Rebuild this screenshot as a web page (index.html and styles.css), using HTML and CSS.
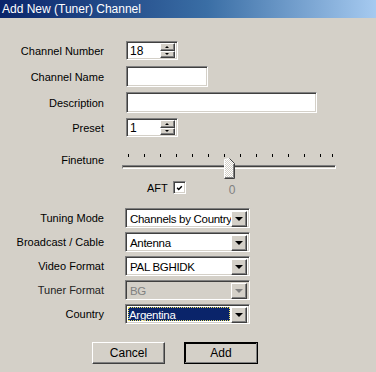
FILE: index.html
```html
<!DOCTYPE html>
<html lang="en">
<head>
    <meta charset="utf-8">
    <link rel="stylesheet" href="styles.css">
</head>
<body>
	<div class="titlebar">Add New (Tuner) Channel</div>
	<div class="dialog">
		<div class="row first">
			<span class="lbl">Channel Number</span>
			<div class="field spin"><span class="val">18</span>
				<div class="spinbtns"><span class="sb up"></span><span class="sb down"></span></div>
			</div>
		</div>
		<div class="row gap6">
			<span class="lbl">Channel Name</span>
			<div class="field name"></div>
		</div>
		<div class="row gap5">
			<span class="lbl">Description</span>
			<div class="field desc"></div>
		</div>
		<div class="row gap5">
			<span class="lbl">Preset</span>
			<div class="field spin"><span class="val">1</span>
				<div class="spinbtns"><span class="sb up"></span><span class="sb down"></span></div>
			</div>
		</div>

		<div class="row finetune">
			<span class="lbl ft">Finetune</span>
			<div class="slider">
				<div class="ticks"></div>
				<div class="track"></div>
				<svg class="thumb" width="11" height="21" viewBox="0 0 11 21">
					<defs>
						<pattern id="dots" width="2" height="2" patternUnits="userSpaceOnUse">
							<rect width="2" height="2" fill="#d4d0c8"/>
							<rect width="1" height="1" fill="#fff"/>
							<rect x="1" y="1" width="1" height="1" fill="#fff"/>
						</pattern>
					</defs>
					<polygon points="0.5,1.5 5.5,0.5 10.5,5.5 10.5,20.5 0.5,20.5" fill="url(#dots)" stroke="none"/>
					<polyline points="0.5,20 0.5,1.5 5.5,0.5" fill="none" stroke="#fff"/>
					<polyline points="5.5,0.5 10.5,5.5 10.5,20.5 0.5,20.5" fill="none" stroke="#404040"/>
					<polyline points="9.5,6 9.5,19.5 1,19.5" fill="none" stroke="#808080"/>
				</svg>
			</div>
		</div>
		<div class="aft">
			<span>AFT</span>
			<span class="check">
				<svg width="9" height="9" viewBox="0 0 9 9"><polyline points="1.5,3.5 3.5,5.8 7.5,1.5" fill="none" stroke="#000" stroke-width="1.8"/></svg>
			</span>
			<span class="zero">0</span>
		</div>

		<div class="row sel-first">
			<span class="lbl">Tuning Mode</span>
			<div class="combo"><span class="ctext">Channels by Country</span><span class="cbtn"></span></div>
		</div>
		<div class="row gap4">
			<span class="lbl">Broadcast / Cable</span>
			<div class="combo"><span class="ctext">Antenna</span><span class="cbtn"></span></div>
		</div>
		<div class="row gap4">
			<span class="lbl">Video Format</span>
			<div class="combo"><span class="ctext">PAL BGHIDK</span><span class="cbtn"></span></div>
		</div>
		<div class="row gap4">
			<span class="lbl dim">Tuner Format</span>
			<div class="combo disabled"><span class="ctext">BG</span><span class="cbtn"></span></div>
		</div>
		<div class="row gap4">
			<span class="lbl">Country</span>
			<div class="combo focused"><span class="ctext">Argentina</span><span class="cbtn"></span></div>
		</div>

		<div class="buttons">
			<button type="button" class="btn">Cancel</button>
			<button type="button" class="btn default">Add</button>
		</div>
	</div>
</body>
</html>
```

FILE: styles.css
```css
    body {
	margin: 0;
	width: 376px;
	height: 372px;
	overflow: hidden;
	background-color: #d4d0c8;
	font-family: "Liberation Sans", Arial, sans-serif;
	font-size: 11px;
	color: #000;
    }

    /* Window caption */
    .titlebar {
	height: 18px;
	line-height: 18px;
	padding-left: 2px;
	font-size: 12px;
	color: #fff;
	background: linear-gradient(to right, #0a246a, #3a6ea5 55%, #a6caf0);
    }

    .row {
	display: flex;
	align-items: center;
    }

    .lbl {
	flex: none;
	width: 104px;
	margin-right: 22px;
	text-align: right;
    }

    .first { margin-top: 23px; }
    .gap6 { margin-top: 6px; }
    .gap5 { margin-top: 5px; }
    .gap4 { margin-top: 4px; }

    /* Sunken edit boxes */
    .field, .combo, .check {
	box-sizing: border-box;
	background-color: #fff;
	border: 1px solid;
	border-color: #808080 #fff #fff #808080;
	box-shadow: inset 1px 1px #404040, inset -1px -1px #d4d0c8;
    }

    .field {
	display: flex;
	align-items: center;
	padding: 2px;
    }

    .spin { width: 52px; height: 19px; }
    .name { width: 82px; height: 21px; }
    .desc { width: 191px; height: 21px; }

    .val {
	flex: 1;
	padding-left: 1px;
	font-size: 12px;
    }

    .spinbtns {
	display: flex;
	flex-direction: column;
	width: 15px;
	height: 15px;
    }

    .sb, .cbtn, .btn {
	box-sizing: border-box;
	background-color: #d4d0c8;
	border: 1px solid;
	border-color: #fff #404040 #404040 #fff;
	box-shadow: inset -1px -1px #808080;
    }

    .sb {
	flex: 1;
	position: relative;
    }

    .sb:after {
	content: "";
	position: absolute;
	left: 4px;
	top: 2px;
	border-left: 2px solid transparent;
	border-right: 2px solid transparent;
    }

    .up:after { border-bottom: 2px solid #000; }
    .down:after { border-top: 2px solid #000; top: 1px; }

    /* Trackbar */
    .finetune {
	margin-top: 15px;
	align-items: flex-start;
    }

    .ft {
	margin-top: 2px;
	margin-right: 18px;
	line-height: 13px;
    }

    .slider {
	position: relative;
	width: 214px;
	height: 27px;
    }

    .ticks {
	position: relative;
	margin: 2px 0 0 6px;
	width: 193px;
	height: 3px;
	background-image: repeating-linear-gradient(to right, #000 0 1px, transparent 1px 16px);
    }

    .ticks:after {
	content: "";
	position: absolute;
	left: 204px;
	top: 0;
	width: 1px;
	height: 3px;
	background-color: #000;
    }

    .track {
	margin-top: 8px;
	height: 4px;
	box-sizing: border-box;
	border: 1px solid;
	border-color: #808080 #fff #fff #808080;
	background-color: #404040;
	box-shadow: inset 0 -1px #d4d0c8;
    }

    .thumb {
	position: absolute;
	left: 102px;
	top: 6px;
    }

    .aft {
	display: flex;
	align-items: center;
	margin-top: 2px;
	padding-left: 147px;
	height: 13px;
    }

    .check {
	width: 13px;
	height: 13px;
	margin-left: 5px;
	padding: 2px;
	display: flex;
    }

    .zero {
	margin: 4px 0 0 43px;
	color: #808080;
	font-size: 12px;
    }

    /* Drop-down lists */
    .sel-first { margin-top: 14px; }

    .row .combo { margin-left: -1px; }

    .combo {
	display: flex;
	width: 125px;
	height: 20px;
	padding: 2px;
    }

    .ctext {
	flex: 1;
	padding-left: 2px;
	line-height: 16px;
	font-size: 11.5px;
	letter-spacing: -0.3px;
	white-space: nowrap;
	overflow: hidden;
    }

    .cbtn {
	position: relative;
	flex: none;
	width: 16px;
	height: 16px;
    }

    .cbtn:after {
	content: "";
	position: absolute;
	left: 3px;
	top: 5px;
	border-left: 4px solid transparent;
	border-right: 4px solid transparent;
	border-top: 4px solid #000;
    }

    .disabled {
	background-color: #d4d0c8;
    }

    .disabled .ctext {
	color: #808080;
    }

    .disabled .cbtn:after {
	border-top-color: #808080;
    }

    .dim {
	color: #222;
    }

    .focused .ctext {
	margin-right: 1px;
	padding-left: 1px;
	background-color: #0a246a;
	color: #fff;
	outline: 1px dotted #e8e060;
	outline-offset: -1px;
    }

    /* Push buttons */
    .buttons {
	display: flex;
	gap: 19px;
	margin-top: 18px;
	padding-left: 92px;
    }

    .btn {
	width: 73px;
	height: 22px;
	padding: 0;
	font-family: inherit;
	font-size: 12px;
	color: #000;
    }

    .default {
	width: 74px;
	outline: 1px solid #000;
	outline-offset: -1px;
	border-color: #fff #404040 #404040 #fff;
	box-shadow: inset -1px -1px #808080, inset 1px 1px #000;
    }
```
